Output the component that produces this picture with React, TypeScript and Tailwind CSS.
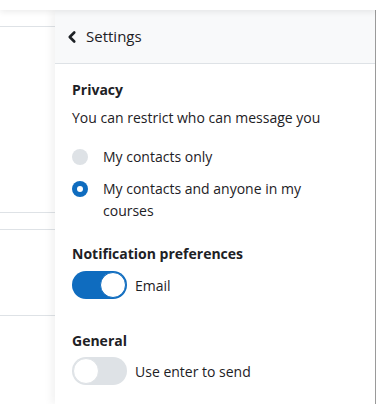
import { ChevronLeft } from "lucide-react"

function Radio({ checked }: { checked?: boolean }) {
  return checked ? (
    <span className="w-4 h-4 rounded-full bg-[#0f6cbf] flex items-center justify-center shrink-0">
      <span className="w-[6px] h-[6px] rounded-full bg-white" />
    </span>
  ) : (
    <span className="block w-4 h-4 rounded-full bg-[#dee2e6] shrink-0" />
  )
}

function Toggle({ on }: { on?: boolean }) {
  return on ? (
    <span className="w-[55px] h-[28px] rounded-full bg-[#0f6cbf] flex items-center justify-end p-[1px] shrink-0">
      <span className="w-[26px] h-[26px] rounded-full bg-white border border-[#0f6cbf]" />
    </span>
  ) : (
    <span className="w-[55px] h-[28px] rounded-full bg-[#dee2e6] flex items-center p-[1px] shrink-0">
      <span className="w-[26px] h-[26px] rounded-full bg-white border border-[#dee2e6]" />
    </span>
  )
}

export default function App() {
  return (
    <div
      className="w-[376px] h-[404px] overflow-hidden bg-white text-[#1d2125] flex flex-col"
      style={{ fontFamily: "'Open Sans', sans-serif" }}
    >
      {/* navbar edge */}
      <div className="h-[10px] bg-white shadow-[0_2px_6px_rgba(0,0,0,0.08)] relative z-10 shrink-0" />

      <div className="flex flex-1">
        {/* page behind the drawer */}
        <div className="w-[55px] shrink-0 flex flex-col">
          <div className="h-[16px]" />
          <div className="border-b border-[#dee2e6]" />
          <div className="h-[185px]" />
          <div className="border-b border-[#dee2e6]" />
          <div className="h-[16px]" />
          <div className="border-b border-[#dee2e6]" />
          <div className="h-[85px]" />
          <div className="border-b border-[#dee2e6]" />
        </div>

        {/* drawer */}
        <div className="flex-1 flex flex-col bg-white border-r border-[#9a9a9a] shadow-[-4px_0_8px_rgba(0,0,0,0.05)] relative">
          <div className="h-[54px] bg-[#f8f9fa] border-b border-[#dee2e6] flex items-center pl-[8px] gap-[5px] text-[15px]">
            <ChevronLeft size={18} strokeWidth={3.5} className="text-[#1d2125]" />
            <span>Settings</span>
          </div>

          <div className="pl-[17px] pr-3 pt-[15px] text-[14px]">
            <div className="font-bold leading-[22px]">Privacy</div>
            <div className="mt-[6px] leading-[22px]">You can restrict who can message you</div>

            <div className="mt-[17px] flex items-center gap-[15px]">
              <Radio />
              <span className="leading-[22px]">My contacts only</span>
            </div>
            <div className="mt-[10px] flex items-start gap-[15px]">
              <span className="pt-[3px] flex"><Radio checked /></span>
              <span className="leading-[22px]">
                My contacts and anyone in my
                <br />
                courses
              </span>
            </div>

            <div className="mt-[21px] font-bold leading-[22px]">Notification preferences</div>
            <div className="mt-[6px] flex items-center gap-[8px]">
              <Toggle on />
              <span>Email</span>
            </div>

            <div className="mt-[31px] font-bold leading-[22px]">General</div>
            <div className="mt-[5px] flex items-center gap-[8px]">
              <Toggle />
              <span>Use enter to send</span>
            </div>
          </div>
        </div>
      </div>
    </div>
  )
}
